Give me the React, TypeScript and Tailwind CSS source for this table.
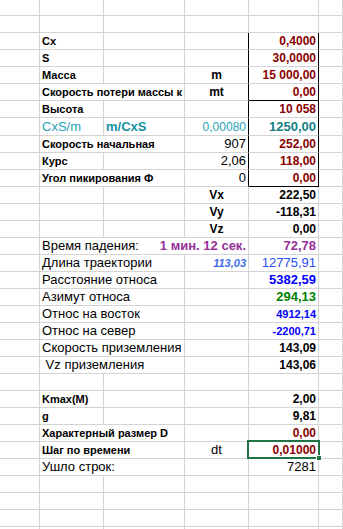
import React from 'react';
import clsx from 'clsx';

type CellProps = {
  span?: number;
  right?: 'black';
  bottom?: 'black';
  className?: string;
  children?: React.ReactNode;
};

const Cell: React.FC<CellProps> = ({ span = 1, right, bottom, className = '', children }) => (
  <div
    className={clsx(
      'relative flex items-end overflow-hidden whitespace-nowrap border-r border-b px-[2px] pb-[1px]',
      right === 'black' ? 'border-r-black' : 'border-r-[#d4d4d4]',
      bottom === 'black' ? 'border-b-black' : 'border-b-[#d4d4d4]',
      span === 2 && 'col-span-2',
      span === 3 && 'col-span-3',
      className
    )}
  >
    {children}
  </div>
);

const Row: React.FC<{ tall?: boolean; first?: boolean; children?: React.ReactNode }> = ({ tall, first, children }) => (
  <div
    className={clsx(
      'grid grid-cols-[40px_64px_81px_64px_70px_1fr]',
      first ? 'h-[16px]' : tall ? 'h-[18px]' : 'h-[17px]'
    )}
  >
    {children}
  </div>
);

const Empty: React.FC<{ first?: boolean }> = ({ first }) => (
  <Row first={first}>
    <Cell />
    <Cell />
    <Cell />
    <Cell />
    <Cell />
    <Cell />
  </Row>
);

const lbl = 'text-[11px] font-bold leading-[13px] text-black';
const reg = 'text-[13px] leading-[15px] text-black';
const val = 'justify-end text-[12px] font-bold leading-[14px]';
const red = 'text-[#8b0000]';
const mid = 'justify-center text-[12px] font-bold leading-[14px]';

// label in B, spilling over C when it is long
const Label: React.FC<{ text: string; wide?: boolean; cls: string }> = ({ text, wide, cls }) =>
  wide ? (
    <Cell span={2} className={cls}>{text}</Cell>
  ) : (
    <>
      <Cell className={cls}>{text}</Cell>
      <Cell />
    </>
  );

// rows inside the black box of column E
const Boxed: React.FC<{ label: string; d?: string; e: string; wide?: boolean; last?: boolean; num?: boolean }> = ({
  label,
  d,
  e,
  wide,
  last,
  num,
}) => (
  <Row>
    <Cell />
    <Label text={label} wide={wide} cls={lbl} />
    <Cell right="black" className={num ? clsx(reg, 'justify-end') : mid}>{d}</Cell>
    <Cell right="black" bottom={last ? 'black' : undefined} className={clsx(val, red)}>{e}</Cell>
    <Cell />
  </Row>
);

const VRow: React.FC<{ d: string; e: string }> = ({ d, e }) => (
  <Row>
    <Cell />
    <Cell />
    <Cell />
    <Cell className={mid}>{d}</Cell>
    <Cell className={clsx(val, 'text-black')}>{e}</Cell>
    <Cell />
  </Row>
);

const Result: React.FC<{ label: string; e: string; eClass: string; wide?: boolean }> = ({ label, e, eClass, wide }) => (
  <Row>
    <Cell />
    <Label text={label} wide={wide} cls={reg} />
    <Cell />
    <Cell className={clsx('justify-end', eClass)}>{e}</Cell>
    <Cell />
  </Row>
);

const Param: React.FC<{ label: string; d?: string; e: string; eClass?: string; wide?: boolean; selected?: boolean }> = ({
  label,
  d,
  e,
  eClass = 'text-black',
  wide,
  selected,
}) => (
  <Row>
    <Cell />
    <Label text={label} wide={wide} cls={lbl} />
    <Cell className={clsx(reg, 'justify-center')}>{d}</Cell>
    <Cell className={clsx(val, eClass, selected && 'overflow-visible z-10')}>
      {selected && (
        <>
          <div className="absolute -top-[2px] -left-[2px] -right-[2px] -bottom-[1px] border-2 border-[#217346]" />
          <div className="absolute -right-[4px] -bottom-[3px] h-[6px] w-[6px] border border-white bg-[#217346]" />
        </>
      )}
      <span className="relative">{e}</span>
    </Cell>
    <Cell />
  </Row>
);

export default function App() {
  return (
    <div className="h-[529px] w-[343px] overflow-hidden bg-white font-['Liberation_Sans',Arial,sans-serif]">
      <Empty first />
      <Empty />

      <Boxed label="Cx" e="0,4000" />
      <Boxed label="S" e="30,0000" />
      <Boxed label="Масса" d="m" e="15 000,00" />
      <Boxed label="Скорость потери массы к" wide d="mt" e="0,00" last />
      <Boxed label="Высота" e="10 058" />

      <Row tall>
        <Cell />
        <Cell className="text-[13px] leading-[15px] text-[#1fa2b4]">CxS/m</Cell>
        <Cell className="text-[13px] font-bold leading-[15px] text-[#17909f]">m/CxS</Cell>
        <Cell right="black" className="justify-end text-[12px] leading-[14px] text-[#1fa2b4]">0,00080</Cell>
        <Cell right="black" className="justify-end text-[13px] font-bold leading-[15px] text-[#127f86]">1250,00</Cell>
        <Cell />
      </Row>

      <Boxed label="Скорость начальная" wide d="907" e="252,00" num />
      <Boxed label="Курс" d="2,06" e="118,00" num />
      <Boxed label="Угол пикирования Ф" wide d="0" e="0,00" num last />

      <VRow d="Vx" e="222,50" />
      <VRow d="Vy" e="-118,31" />
      <VRow d="Vz" e="0,00" />

      <Row>
        <Cell />
        <Cell span={3} className={clsx(reg, 'justify-between')}>
          <span>Время падения:</span>
          <span className="font-bold text-[#96309a]">1 мин. 12 сек.</span>
        </Cell>
        <Cell className="justify-end text-[13px] font-bold leading-[15px] text-[#96309a]">72,78</Cell>
        <Cell />
      </Row>
      <Row>
        <Cell />
        <Cell span={2} className={reg}>Длина траектории</Cell>
        <Cell className="justify-end text-[11px] font-bold italic leading-[13px] text-[#3d6cf0]">113,03</Cell>
        <Cell className="justify-end text-[13px] leading-[15px] text-[#2a4ef5]">12775,91</Cell>
        <Cell />
      </Row>
      <Result label="Расстояние относа" wide e="5382,59" eClass="text-[13px] font-bold leading-[15px] text-[#0000ff]" />
      <Result label="Азимут относа" wide e="294,13" eClass="text-[13px] font-bold leading-[15px] text-[#008000]" />
      <Result label="Относ на восток" wide e="4912,14" eClass="text-[11px] font-bold leading-[13px] text-[#0000ff]" />
      <Result label="Относ на север" wide e="-2200,71" eClass="text-[11px] font-bold leading-[13px] text-[#0000ff]" />
      <Result label="Скорость приземления" wide e="143,09" eClass="text-[12px] font-bold leading-[14px] text-black" />
      <Result label={'\u00a0Vz приземления'} wide e="143,06" eClass="text-[12px] font-bold leading-[14px] text-black" />

      <Empty />

      <Param label="Kmax(M)" e="2,00" />
      <Param label="g" e="9,81" />
      <Param label="Характерный размер D" wide e="0,00" eClass={red} />
      <Param label="Шаг по времени" wide d="dt" e="0,01000" eClass={red} selected />

      <Row>
        <Cell />
        <Cell span={2} className={reg}>Ушло строк:</Cell>
        <Cell />
        <Cell className="justify-end text-[13px] leading-[15px] text-black">7281</Cell>
        <Cell />
      </Row>
      <Empty />
      <Empty />
      <Empty />
      <Empty />
    </div>
  );
}
